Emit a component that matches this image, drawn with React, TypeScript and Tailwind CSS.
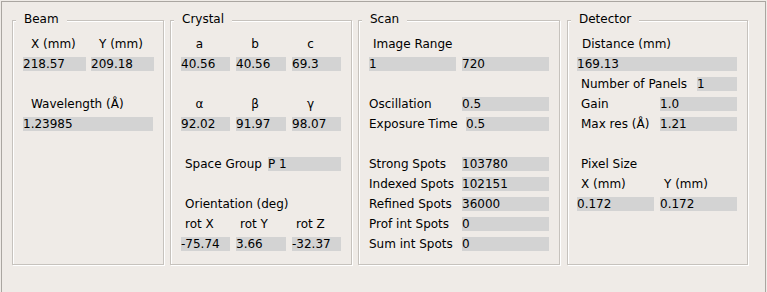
import { ReactNode } from "react";

function Field({ w, children }: { w: number; children?: ReactNode }) {
  return (
    <div
      className="h-[14px] bg-[#d3d3d3] leading-[14px] whitespace-nowrap overflow-hidden"
      style={{ width: w }}
    >
      {children}
    </div>
  );
}

function Row({ children, className = "" }: { children?: ReactNode; className?: string }) {
  return <div className={`h-[14px] leading-[14px] flex whitespace-nowrap ${className}`}>{children}</div>;
}

function GroupBox({
  title,
  width,
  pl,
  children,
}: {
  title: string;
  width: string;
  pl: string;
  children: ReactNode;
}) {
  return (
    <div
      className={`relative h-[245px] shrink-0 border border-[#c6c2bd] shadow-[inset_1px_1px_0_#ffffff,1px_1px_0_#ffffff] pt-[16px] ${width} ${pl}`}
    >
      {/* title sits over the top line */}
      <div className="absolute left-[3px] top-[-9px] px-[8px] h-[14px] leading-[14px] bg-[#efebe7]">
        {title}
      </div>
      <div className="flex flex-col gap-[6px]">{children}</div>
    </div>
  );
}

export default function App() {
  return (
    <div
      className="w-[767px] h-[292px] overflow-hidden bg-[#efebe7] pt-px pl-px text-[12px] text-black"
      style={{ fontFamily: '"DejaVu Sans", "Liberation Sans", sans-serif' }}
    >
      <div className="w-[765px] h-[320px] border-t border-l border-r border-[#aaa6a1] pl-[10px] pt-[18px] flex">
        {/* Beam */}
        <GroupBox title="Beam" width="w-[152px]" pl="pl-[10px]">
          <Row className="gap-[5px]">
            <div className="w-[63px] pl-[8px]">X (mm)</div>
            <div className="w-[63px] pl-[8px]">Y (mm)</div>
          </Row>
          <Row className="gap-[5px]">
            <Field w={63}>218.57</Field>
            <Field w={63}>209.18</Field>
          </Row>
          <Row />
          <Row className="pl-[8px]">Wavelength (Å)</Row>
          <Row>
            <Field w={130}>1.23985</Field>
          </Row>
        </GroupBox>

        {/* Crystal */}
        <GroupBox title="Crystal" width="w-[182px] ml-[6px]" pl="pl-[10px]">
          <Row className="gap-[6px]">
            <div className="w-[49px] pr-[12px] text-center">a</div>
            <div className="w-[50px] pr-[12px] text-center">b</div>
            <div className="w-[49px] pr-[12px] text-center">c</div>
          </Row>
          <Row className="gap-[6px]">
            <Field w={49}>40.56</Field>
            <Field w={50}>40.56</Field>
            <Field w={49}>69.3</Field>
          </Row>
          <Row />
          <Row className="gap-[6px]">
            <div className="w-[49px] pr-[12px] text-center">α</div>
            <div className="w-[50px] pr-[12px] text-center">β</div>
            <div className="w-[49px] pr-[12px] text-center">γ</div>
          </Row>
          <Row className="gap-[6px]">
            <Field w={49}>92.02</Field>
            <Field w={50}>91.97</Field>
            <Field w={49}>98.07</Field>
          </Row>
          <Row />
          <Row className="w-[160px] justify-between">
            <div className="pl-[4px]">Space Group</div>
            <Field w={73}>P 1</Field>
          </Row>
          <Row />
          <Row className="pl-[4px]">Orientation (deg)</Row>
          <Row className="gap-[6px]">
            <div className="w-[49px] pl-[4px]">rot X</div>
            <div className="w-[50px] pl-[4px]">rot Y</div>
            <div className="w-[49px] pl-[4px]">rot Z</div>
          </Row>
          <Row className="gap-[6px]">
            <Field w={49}>-75.74</Field>
            <Field w={50}>3.66</Field>
            <Field w={49}>-32.37</Field>
          </Row>
        </GroupBox>

        {/* Scan */}
        <GroupBox title="Scan" width="w-[202px] ml-[6px]" pl="pl-[10px]">
          <Row className="pl-[4px]">Image Range</Row>
          <Row className="gap-[6px]">
            <Field w={87}>1</Field>
            <Field w={87}>720</Field>
          </Row>
          <Row />
          <Row className="gap-[6px]">
            <div className="w-[87px]">Oscillation</div>
            <Field w={87}>0.5</Field>
          </Row>
          <Row className="gap-[6px]">
            <div className="w-[87px]">Exposure Time</div>
            <div className="pl-[4px]">
              <Field w={83}>0.5</Field>
            </div>
          </Row>
          <Row />
          {[
            ["Strong Spots", "103780"],
            ["Indexed Spots", "102151"],
            ["Refined Spots", "36000"],
            ["Prof int Spots", "0"],
            ["Sum int Spots", "0"],
          ].map(([label, value]) => (
            <Row key={label} className="gap-[6px]">
              <div className="w-[87px]">{label}</div>
              <Field w={87}>{value}</Field>
            </Row>
          ))}
        </GroupBox>

        {/* Detector */}
        <GroupBox title="Detector" width="w-[181px] ml-[7px]" pl="pl-[9px]">
          <Row className="pl-[5px]">Distance (mm)</Row>
          <Row>
            <Field w={160}>169.13</Field>
          </Row>
          <Row className="w-[160px] justify-between">
            <div className="pl-[4px]">Number of Panels</div>
            <Field w={40}>1</Field>
          </Row>
          <Row className="w-[160px] justify-between">
            <div className="pl-[4px]">Gain</div>
            <Field w={77}>1.0</Field>
          </Row>
          <Row className="w-[160px] justify-between">
            <div className="pl-[4px]">Max res (Å)</div>
            <Field w={77}>1.21</Field>
          </Row>
          <Row />
          <Row className="pl-[4px]">Pixel Size</Row>
          <Row className="gap-[6px]">
            <div className="w-[77px] pl-[4px]">X (mm)</div>
            <div className="w-[77px] pl-[4px]">Y (mm)</div>
          </Row>
          <Row className="gap-[6px]">
            <Field w={77}>0.172</Field>
            <Field w={77}>0.172</Field>
          </Row>
        </GroupBox>
      </div>
    </div>
  );
}
